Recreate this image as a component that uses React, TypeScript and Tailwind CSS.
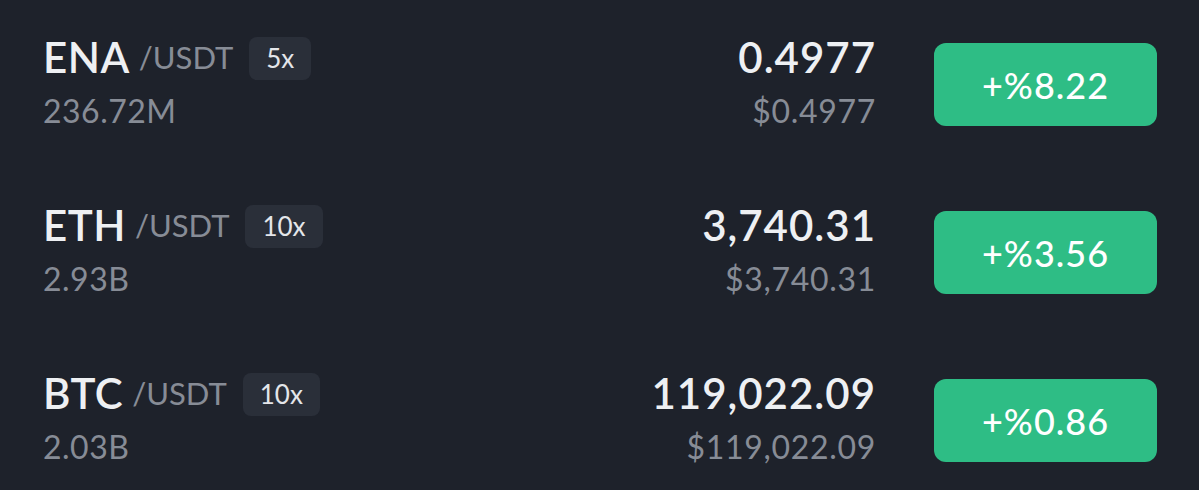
const rows = [
  { sym: "ENA", lev: "5x", vol: "236.72M", price: "0.4977", usd: "$0.4977", chg: "+%8.22" },
  { sym: "ETH", lev: "10x", vol: "2.93B", price: "3,740.31", usd: "$3,740.31", chg: "+%3.56" },
  { sym: "BTC", lev: "10x", vol: "2.03B", price: "119,022.09", usd: "$119,022.09", chg: "+%0.86" },
];

export default function App() {
  return (
    <div className="w-[1199px] h-[490px] overflow-hidden bg-[#1e222b] pl-[43px] pr-[42px] font-['Lato',sans-serif]">
      {rows.map((r) => (
        <div key={r.sym} className="flex h-[168px] items-start">
          <div className="flex flex-col pt-[36px]">
            <div className="flex items-center h-[42px]">
              <span className="text-[42px] leading-none font-semibold tracking-[0.5px] text-[#eef0f3]">{r.sym}</span>
              <span className="ml-[9px] text-[31px] leading-none text-[#878c96]">/USDT</span>
              <span className="ml-[16px] mt-[2px] rounded-[8px] bg-[#2a2f39] h-[43px] px-[17px] flex items-center text-[26px] leading-none text-[#e4e6ea]">{r.lev}</span>
            </div>
            <span className="mt-[17px] text-[32px] leading-none tracking-[0.5px] text-[#878c96]">{r.vol}</span>
          </div>
          <div className="ml-auto flex flex-col items-end pt-[36px]">
            <span className="h-[42px] text-[42px] leading-none font-semibold tracking-[1px] text-[#eef0f3]">{r.price}</span>
            <span className="mt-[17px] text-[32px] leading-none tracking-[0.7px] text-[#878c96]">{r.usd}</span>
          </div>
          <div className="ml-[58px] mt-[43px] w-[223px] h-[83px] rounded-[12px] bg-[#2ebd85] flex items-center justify-center text-[36px] leading-none tracking-[1px] text-white font-medium">
            {r.chg}
          </div>
        </div>
      ))}
    </div>
  );
}
